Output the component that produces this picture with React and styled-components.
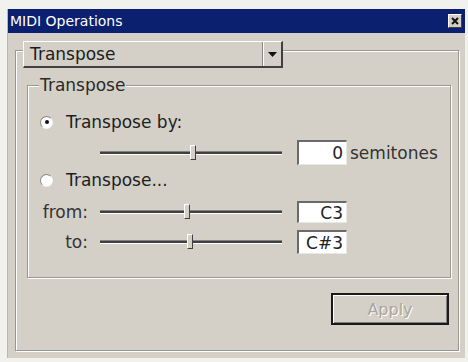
import React from 'react';
import styled, { createGlobalStyle } from 'styled-components';

const Global = createGlobalStyle`
  body {
    margin: 0;
    background: #f1f1ed;
    font-family: "DejaVu Sans", "Liberation Sans", sans-serif;
  }
`

const Page = styled.div`
  width: 468px;
  height: 362px;
  padding: 9px 0 0 7px;
  box-sizing: border-box;
`

const Window = styled.div`
  width: 458px;
  height: 349px;
  display: flex;
  flex-direction: column;
  background: #d4d0c8;
  border-left: 1px solid #b8b6ae;
  box-sizing: border-box;
`

const TitleBar = styled.div`
  height: 24px;
  flex: none;
  display: flex;
  align-items: center;
  justify-content: space-between;
  padding: 0 3px 0 2px;
  background: #0b2170;
  color: #fff;
  font-size: 14px;
`

const CloseBox = styled.div`
  width: 14px;
  height: 14px;
  display: flex;
  align-items: center;
  justify-content: center;
  background: #d4d0c8;
  box-sizing: border-box;
  border-top: 1px solid #fff;
  border-left: 1px solid #fff;
  border-right: 1px solid #404040;
  border-bottom: 1px solid #404040;
`

const Body = styled.div`
  flex: 1;
  padding: 17px 6px 7px 7px;
  display: flex;
  flex-direction: column;
`

const Panel = styled.div`
  flex: 1;
  display: flex;
  flex-direction: column;
  border: 1px solid #9a978f;
  box-shadow: inset 1px 1px 0 #fff, 1px 1px 0 #fff;
  padding: 0 7px 24px 7px;
`

const Combo = styled.div`
  width: 260px;
  height: 27px;
  margin-top: -10px;
  display: flex;
  box-sizing: border-box;
  background: #d4d0c8;
  border-top: 1px solid #fff;
  border-left: 1px solid #fff;
  border-right: 2px solid #404040;
  border-bottom: 2px solid #404040;
  font-size: 17px;
  color: #1c1c1c;
`

const ComboText = styled.div`
  flex: 1;
  display: flex;
  align-items: center;
  padding-left: 6px;
`

const ComboArrow = styled.div`
  width: 18px;
  display: flex;
  align-items: center;
  justify-content: center;
  border-left: 1px solid #8a8882;
  box-shadow: inset 1px 0 0 #fff;
`

const Group = styled.fieldset`
  margin: 7px 0 0 4px;
  padding: 17px 0 23px 12px;
  border: 1px solid #9a978f;
  box-shadow: inset 1px 1px 0 #fff, 1px 1px 0 #fff;
  min-inline-size: 0;
`

const Legend = styled.legend`
  padding: 0 1px;
  margin-left: -1px;
  font-size: 17px;
  line-height: 20px;
  color: #2a2a2a;
  background: #d4d0c8;
`

const Row = styled.div`
  display: flex;
  align-items: center;
  height: ${p => p.$h}px;
  margin-top: ${p => p.$top || 0}px;
  font-size: 17px;
  color: #1e1e1e;
`

const Radio = styled.span`
  width: 13px;
  height: 13px;
  border-radius: 50%;
  box-sizing: border-box;
  background: #fff;
  border: 1px solid;
  border-color: #8a8882 #f4f4f4 #f4f4f4 #8a8882;
  display: flex;
  align-items: center;
  justify-content: center;
  margin-right: 13px;

  &::after {
    content: '';
    width: 4px;
    height: 4px;
    border-radius: 50%;
    background: ${p => (p.$on ? '#111' : 'transparent')};
  }
`

const Label = styled.span`
  width: 48px;
  text-align: right;
  color: #333;
`

const Track = styled.div`
  position: relative;
  width: 182px;
  height: 4px;
  margin-left: ${p => p.$ml}px;
  box-sizing: border-box;
  border-top: 1px solid #808080;
  border-bottom: 1px solid #fff;
  background: #404040;
`

const Thumb = styled.div`
  position: absolute;
  top: -7px;
  width: 6px;
  height: 15px;
  margin-left: -3px;
  box-sizing: border-box;
  background: #d4d0c8;
  border-top: 1px solid #fff;
  border-left: 1px solid #fff;
  border-right: 1px solid #404040;
  border-bottom: 1px solid #404040;
`

const ValueBox = styled.div`
  width: 50px;
  height: ${p => p.$h}px;
  margin-left: 15px;
  box-sizing: border-box;
  background: #fff;
  border-top: 2px solid #6a6a6a;
  border-left: 2px solid #6a6a6a;
  border-right: 1px solid #e8e8e8;
  border-bottom: 1px solid #e8e8e8;
  display: flex;
  align-items: center;
  justify-content: flex-end;
  padding-right: 3px;
  color: #222;
`

const Unit = styled.span`
  margin-left: 3px;
  color: #333;
`

const Footer = styled.div`
  display: flex;
  justify-content: flex-end;
  margin-top: 15px;
  padding-right: 2px;
`

const Button = styled.button`
  width: 118px;
  height: 32px;
  box-sizing: border-box;
  background: #d4d0c8;
  border: 2px solid #1a1a1a;
  box-shadow: inset 1px 1px 0 #fff, inset -1px -1px 0 #808080;
  font-family: inherit;
  font-size: 16px;
  color: #a8a69f;
  text-shadow: 1px 1px 0 #fff;
`

const Slider = ({ value, ml }) => (
  <Track $ml={ml}>
    <Thumb style={{ left: `${value * 100}%` }} />
  </Track>
)

export default function App() {
  return (
    <Page>
      <Global />
      <Window>
        <TitleBar>
          <span>MIDI Operations</span>
          <CloseBox>
            <svg width="8" height="8" viewBox="0 0 8 8">
              <path d="M1 1 L7 7 M7 1 L1 7" stroke="#111" strokeWidth="2" />
            </svg>
          </CloseBox>
        </TitleBar>
        <Body>
          <Panel>
            <Combo>
              <ComboText>Transpose</ComboText>
              <ComboArrow>
                <svg width="9" height="5" viewBox="0 0 9 5">
                  <path d="M0 0 H9 L4.5 5 Z" fill="#111" />
                </svg>
              </ComboArrow>
            </Combo>
            <Group>
              <Legend>Transpose</Legend>
              <Row $h={20}>
                <Radio $on />
                Transpose by:
              </Row>
              <Row $h={25} $top={8}>
                <Slider value={0.51} ml={60} />
                <ValueBox $h={25}>0</ValueBox>
                <Unit>semitones</Unit>
              </Row>
              <Row $h={20} $top={5}>
                <Radio />
                Transpose...
              </Row>
              <Row $h={22} $top={11}>
                <Label>from:</Label>
                <Slider value={0.48} ml={12} />
                <ValueBox $h={22}>C3</ValueBox>
              </Row>
              <Row $h={24} $top={7}>
                <Label>to:</Label>
                <Slider value={0.495} ml={12} />
                <ValueBox $h={24}>C#3</ValueBox>
              </Row>
            </Group>
            <Footer>
              <Button disabled>Apply</Button>
            </Footer>
          </Panel>
        </Body>
      </Window>
    </Page>
  );
}
